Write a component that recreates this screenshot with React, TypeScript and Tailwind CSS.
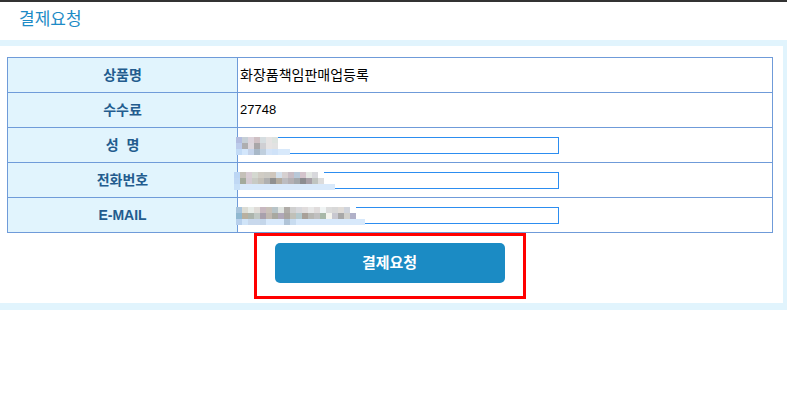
import React from "react";

const F = { fontFamily: '"Liberation Sans", "Noto Sans CJK KR", sans-serif' };

type Blur = { x: number; y: number; rows: string[][]; tail: number };

function Pixels({ b }: { b: Blur }) {
  return (
    <div className="absolute pointer-events-none" style={{ left: b.x, top: b.y }}>
      {b.rows.map((r, i) => (
        <div key={i} className="flex">
          {r.map((c, j) => (
            <div key={j} style={{ width: 6, height: 6, background: c }} />
          ))}
          {i === b.rows.length - 1 && (
            <div style={{ width: b.tail, height: 6, background: "#d8e9fb" }} />
          )}
        </div>
      ))}
    </div>
  );
}

const nameBlur: Blur = {
  x: 236,
  y: 137,
  rows: [
    ["#b4bde0", "#c6cfd6", "#dcd3db", "#cfc0c4", "#d6dde0", "#e6e3e3", "#dde3df"],
    ["#bccbeb", "#aeaeb0", "#dcd6dc", "#a9a6a8", "#cfcfd3", "#e6e3e3", "#e2e2e2"],
    ["#c3dbf6", "#d3e6fb", "#c5d3ea", "#a8b8c8", "#c0cfde", "#d4e4f8", "#cfe2f8"],
  ],
  tail: 12,
};
const phoneBlur: Blur = {
  x: 234,
  y: 172,
  rows: [
    ["#bcd6f4", "#c5c0b8", "#d8ccd4", "#d4d8d0", "#d0ccc4", "#cccac4", "#cfc6bc", "#d4e0ec", "#d6d0d0", "#c8bcc4", "#b8c8d8", "#d4c4cc", "#e4e8e4", "#d8d8dc", "#ffffff"],
    ["#c0d8f4", "#a4aa9c", "#d4cad2", "#c8cac4", "#c4c0b8", "#b0b0b0", "#909090", "#b4aca0", "#bcbcc0", "#b4b0b4", "#a4a8ac", "#8c8c90", "#a8a0a8", "#c0c4c0", "#dcdcdc"],
    ["#c8e0f8", "#d8e9fb", "#d8e9fb", "#d8e9fb", "#d8e9fb", "#d8e9fb", "#d8e9fb", "#d8e9fb", "#d8e9fb", "#d8e9fb", "#d8e9fb", "#d8e9fb", "#d8e9fb", "#d8e9fb", "#d8e9fb"],
  ],
  tail: 11,
};
const mailBlur: Blur = {
  x: 236,
  y: 207,
  rows: [
    ["#a8c4dc", "#dcdcd4", "#e8ece8", "#e0dcd8", "#c8b8c0", "#c8c0b8", "#b8c4c8", "#e0e4e0", "#b0aca8", "#d0d0d0", "#d8d8dc", "#e0dcdc", "#e8e8e8", "#e0dcdc", "#f0f4f4", "#dcdcdc", "#d8d8d8", "#e0dcd8", "#d0d4dc", "#ffffff"],
    ["#90b8d0", "#b8b0a0", "#acb4ac", "#c0c8c4", "#a8a0ac", "#c0b8b0", "#a8a8a0", "#b0a8b8", "#a8a4a0", "#c0c0b8", "#b4c8cc", "#a8a098", "#b8b8b4", "#c0c0c0", "#a8b8a8", "#f4f4ee", "#c8c8d0", "#a8a8a8", "#d0d0cc", "#b0b0c8"],
    ["#b8d0ec", "#d0e4f8", "#c8d8ec", "#c8d8ec", "#c4d6ea", "#d8e9fb", "#d8e9fb", "#d8e9fb", "#b0c4d8", "#c8dcf0", "#d8e9fb", "#d8e9fb", "#d8e9fb", "#d8e9fb", "#d8e9fb", "#d8e9fb", "#d8e9fb", "#d8e9fb", "#d8e9fb", "#d8e9fb"],
  ],
  tail: 9,
};

function Label({ children }: { children: React.ReactNode }) {
  return (
    <div className="h-[35px] border-r border-b border-[#6f9bd9] bg-[#e1f4fd] flex items-center justify-center text-[14px] font-bold text-[#235c8e]">
      {children}
    </div>
  );
}

function Value({ children, small }: { children: React.ReactNode; small?: boolean }) {
  return (
    <div
      className={
        small
          ? "h-[35px] border-r border-b border-[#6f9bd9] flex items-center pl-[2px] text-[13px] text-black"
          : "h-[35px] border-r border-b border-[#6f9bd9] flex items-center pl-[2px] text-[14px] text-black"
      }
    >
      {children}
    </div>
  );
}

function InputCell() {
  return (
    <div className="h-[35px] border-r border-b border-[#6f9bd9] flex items-center pl-[1px] pt-[1px]">
      <div className="w-[320px] h-[17px] border border-[#2c8df0] bg-white" />
    </div>
  );
}

export default function App() {
  return (
    <div className="relative w-[787px] h-[410px] bg-white overflow-hidden" style={F}>
      <div className="h-[40px] border-t-2 border-[#333333] flex items-center pl-[19px] pb-[2px]">
        <span className="text-[17px] text-[#1d8bc6]">결제요청</span>
      </div>
      <div className="bg-[#e1f4fd] pt-[6px] pr-[4px] pb-[7px]">
        <div className="bg-white pt-[11px] pb-[20px]">
          <div className="ml-[7px] w-[766px] grid grid-cols-[230px_1fr] border-l border-t border-[#6f9bd9]">
            <Label>상품명</Label>
            <Value>화장품책임판매업등록</Value>
            <Label>수수료</Label>
            <Value small>27748</Value>
            <Label>성&nbsp;&nbsp;명</Label>
            <InputCell />
            <Label>전화번호</Label>
            <InputCell />
            <Label>E-MAIL</Label>
            <InputCell />
          </div>
          <div className="flex justify-center pt-[10px] pr-[4px]">
            <button className="w-[230px] h-[40px] rounded-[5px] bg-[#1b8bc4] text-white text-[15px] font-bold">
              결제요청
            </button>
          </div>
        </div>
      </div>
      <Pixels b={nameBlur} />
      <Pixels b={phoneBlur} />
      <Pixels b={mailBlur} />
      <div className="absolute left-[254px] top-[233px] w-[272px] h-[66px] border-[3px] border-[#ff0000] pointer-events-none" />
    </div>
  );
}
